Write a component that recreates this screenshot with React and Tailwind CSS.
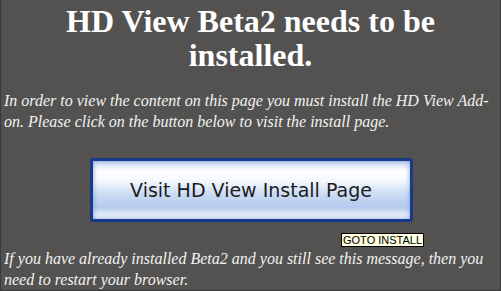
export default function App() {
  return (
    <div className="relative h-[291px] w-[501px] overflow-hidden border-x border-b border-[#3b3a39] bg-[#545250] text-white">
      <h1 className="pt-[4px] text-center font-['Liberation_Serif',serif] text-[32px] font-bold leading-[34px]">
        HD View Beta2 needs to be
        <br />
        installed.
      </h1>

      <p className="mt-[18px] pl-[3px] font-['Liberation_Serif',serif] text-[16px] italic leading-[21px] text-[#f2f2f2]">
        <span className="block whitespace-nowrap">
          In order to view the content on this page you must install the HD View Add-
        </span>
        <span className="block whitespace-nowrap">on. Please click on the button below to visit the install page.</span>
      </p>

      <div className="mt-[26px] flex justify-center pl-[1px]">
        <button className="h-[64px] w-[323px] rounded-[3px] border-[3px] border-[#173a8a] bg-[linear-gradient(180deg,#cfdcf2_0%,#ffffff_18%,#f4f8fe_35%,#c9daf3_58%,#b5cbee_80%,#e6eefa_93%,#ffffff_100%)] shadow-[inset_0_0_5px_#7d9bd2] font-['DejaVu_Sans',sans-serif] text-[19px] text-[#1d1d1d]">
          Visit HD View Install Page
        </button>
      </div>

      <div className="absolute left-[340px] top-[233px] border border-black bg-[#ffffe1] px-[1px] font-['Liberation_Sans',sans-serif] text-[11px] leading-[12px] text-black">
        GOTO INSTALL
      </div>

      <p className="mt-[26px] pl-[3px] font-['Liberation_Serif',serif] text-[16px] italic leading-[21px] text-[#f2f2f2]">
        <span className="block whitespace-nowrap">
          If you have already installed Beta2 and you still see this message, then you
        </span>
        <span className="block whitespace-nowrap">need to restart your browser.</span>
      </p>
    </div>
  );
}
